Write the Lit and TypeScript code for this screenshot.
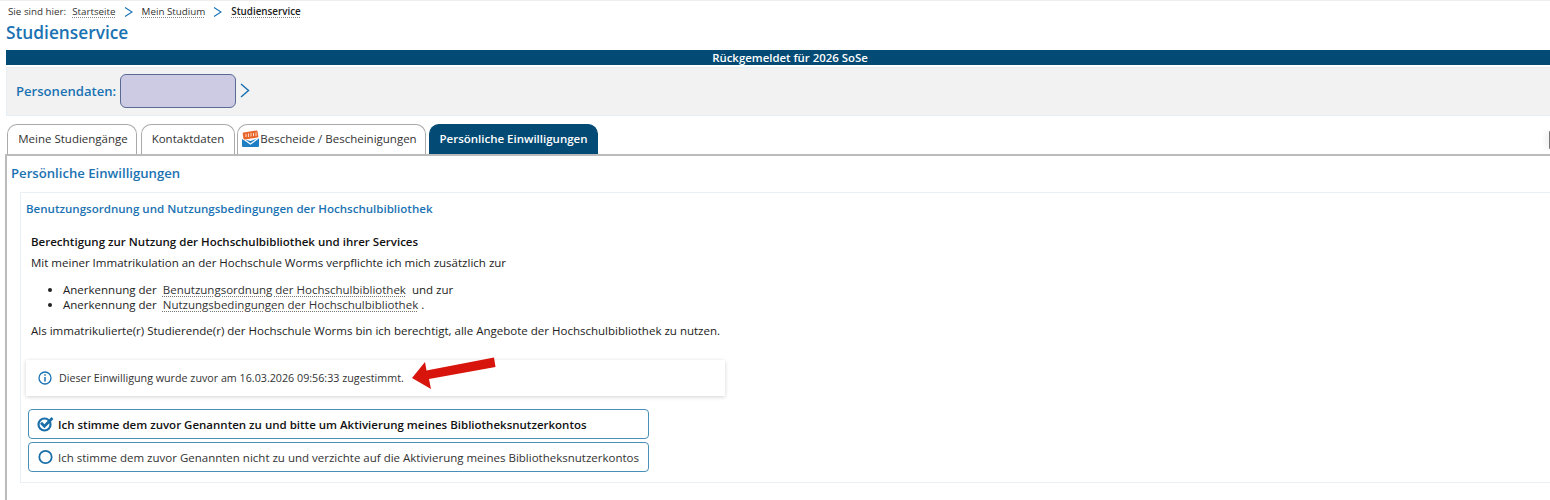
import { LitElement, html, css } from "lit";
import { customElement } from "lit/decorators.js";

@customElement("app-root")
export class AppRoot extends LitElement {
  static styles = css`
    :host { display: block; width: 1550px; height: 500px; overflow: hidden; background: #fff; font-family: "Open Sans", sans-serif; color: #222; font-size: 12px; }
    .crumbs { height: 22px; padding-left: 8px; display: flex; align-items: center; font-size: 9.8px; color: #333; border-top: 1px solid #eee; box-sizing: border-box; white-space: nowrap; }
    .crumbs .lbl { margin-right: 6px; }
    .crumbs a { color: #333; text-decoration: underline dotted #888; text-underline-offset: 2px; }
    .crumbs svg { margin: 0 9px 0 8px; }
    .crumbs b { font-weight: 600; color: #222; text-decoration: underline dotted #888; text-underline-offset: 2px; }
    h1 { margin: 0 0 0 6px; height: 27px; padding-top: 1px; font-size: 17.3px; line-height: 20px; font-weight: 600; color: #1a72b2; }
    .bar { margin-left: 6px; padding-left: 24px; height: 15px; background: #034a74; color: #fff; font-size: 11.4px; font-weight: 600; line-height: 15px; text-align: center; }
    .person { margin: 2px 0 0 6px; height: 49px; box-sizing: border-box; background: #f3f2f2; border: 1px solid #e6eef5; border-width: 1px 0 1px 1px; display: flex; align-items: center; padding: 0 0 2px 9px; }
    .person span { font-size: 13.1px; font-weight: 600; color: #1a72b2; margin-right: 4px; }
    .pbox { width: 116px; height: 34px; box-sizing: border-box; background: #cdcbe3; border: 1px solid #5a6a94; border-radius: 6px; margin-right: 4px; }
    .tabs { display: flex; margin: 7px 0 0 7px; height: 31px; align-items: flex-end; white-space: nowrap; }
    .tab { height: 30px; box-sizing: border-box; border: 1px solid #aaa; border-bottom: none; border-radius: 10px 10px 0 0; background: #fff; color: #333; display: flex; align-items: center; justify-content: center; font-size: 11.5px; padding-bottom: 2px; }
    .t1 { width: 130px; padding-left: 2px; }
    .t2 { width: 94px; margin-left: 4px; }
    .t3 { width: 189px; margin-left: 2px; gap: 1px; padding-right: 4px; }
    .t4 { width: 169px; margin-left: 3px; background: #034a74; border-color: #034a74; color: #fff; font-weight: 600; }
    .main { margin: 0 0 0 5px; height: 346px; box-sizing: border-box; border: 1px solid #bbb; border-width: 2px 0 0 2px; padding: 8px 0 0 4px; }
    h2 { margin: 0; height: 28px; font-size: 13.15px; line-height: 18px; font-weight: 600; color: #1a72b2; }
    .card { margin-left: 9px; height: 291px; box-sizing: border-box; border: 1px solid #e8f0f5; border-right: none; padding: 8px 0 0 5px; }
    h3 { margin: 0; font-size: 11.55px; line-height: 16px; font-weight: 600; color: #1a72b2; }
    .body { padding: 17px 0 0 5px; font-size: 11.53px; color: #222; }
    .body p { margin: 0; line-height: 16px; }
    .body .t { font-weight: 600; color: #111; height: 21px; }
    .body ul { margin: 12px 0 11px; padding-left: 32px; line-height: 14.5px; }
    .body a { color: #333; text-decoration: underline dotted #777; text-underline-offset: 2px; margin: 0 3px; }
    .info { margin: 21px 0 0 0; width: 699px; height: 36px; box-sizing: border-box; box-shadow: 0 1px 4px rgba(0,0,0,.18); display: flex; align-items: center; padding-left: 12px; gap: 7px; font-size: 10.73px; color: #333; }
    .opts { margin: 13px 0 0 2px; display: flex; flex-direction: column; gap: 3px; }
    .opt { width: 621px; height: 30px; box-sizing: border-box; border: 1px solid #4a8fb8; border-radius: 4px; display: flex; align-items: center; padding-left: 8px; gap: 4px; font-size: 11.5px; color: #333; background: #fff; white-space: nowrap; }
    .opt svg { flex: none; }
    .opt.on { font-weight: 600; color: #111; }
    .arrow { position: absolute; left: 412px; top: 356px; }
    .handle { position: absolute; right: 0; top: 131px; width: 1px; height: 18px; background: #777; border-radius: 2px 0 0 2px; box-shadow: -2px 0 5px rgba(0,0,0,.25); }
  `;

  private chev() {
    return html`<svg width="9" height="10" viewBox="0 0 9 10" fill="none" stroke="#1a72b2" stroke-width="1.1"><path d="M1 .5 8 5 1 9.5"/></svg>`;
  }

  render() {
    return html`
      <div class="crumbs"><span class="lbl">Sie sind hier:</span><a>Startseite</a>${this.chev()}<a>Mein Studium</a>${this.chev()}<b>Studienservice</b></div>
      <h1>Studienservice</h1>
      <div class="bar">Rückgemeldet für 2026 SoSe</div>
      <div class="person"><span>Personendaten:</span><div class="pbox"></div>
        <svg width="10" height="15" viewBox="0 0 10 15" fill="none" stroke="#1a72b2" stroke-width="1.5"><path d="M1 1l7.5 6.5L1 14"/></svg></div>
      <div class="tabs">
        <div class="tab t1">Meine Studiengänge</div>
        <div class="tab t2">Kontaktdaten</div>
        <div class="tab t3">
          <svg width="17" height="17" viewBox="0 0 17 17"><path d="M0 9l8.5 2L17 8v8a1 1 0 0 1-1 1H1a1 1 0 0 1-1-1z" fill="#1c7fc4"/><path d="M.5 8.5l8 5.5 8-6" fill="none" stroke="#fff" stroke-width="1.2"/><rect x="1" y="1.5" width="15" height="7" rx="1.2" fill="#e8652b" transform="rotate(-9 8.5 5)"/><path d="M4 7V4M6.5 7V3.5M9 6.5V3M11.5 6V3M14 6V2.5" stroke="#fbd9c4" stroke-width="1"/></svg>
          Bescheide / Bescheinigungen</div>
        <div class="tab t4">Persönliche Einwilligungen</div>
      </div>
      <div class="main">
        <h2>Persönliche Einwilligungen</h2>
        <div class="card">
          <h3>Benutzungsordnung und Nutzungsbedingungen der Hochschulbibliothek</h3>
          <div class="body">
            <p class="t">Berechtigung zur Nutzung der Hochschulbibliothek und ihrer Services</p>
            <p>Mit meiner Immatrikulation an der Hochschule Worms verpflichte ich mich zusätzlich zur</p>
            <ul>
              <li>Anerkennung der <a>Benutzungsordnung der Hochschulbibliothek</a> und zur</li>
              <li>Anerkennung der <a>Nutzungsbedingungen der Hochschulbibliothek</a>.</li>
            </ul>
            <p>Als immatrikulierte(r) Studierende(r) der Hochschule Worms bin ich berechtigt, alle Angebote der Hochschulbibliothek zu nutzen.</p>
          </div>
          <div class="info">
            <svg width="14" height="14" viewBox="0 0 14 14" fill="none" stroke="#1a72b2" stroke-width="1.3"><circle cx="7" cy="7" r="6"/><path d="M7 6v4.5M7 3.3v1.4" stroke-width="1.5"/></svg>
            Dieser Einwilligung wurde zuvor am 16.03.2026 09:56:33 zugestimmt.
          </div>
          <div class="opts">
            <div class="opt on">
              <svg width="17" height="16" viewBox="0 0 17 16" fill="none"><circle cx="7.5" cy="8.5" r="6" stroke="#1b6fa8" stroke-width="2.2"/><path d="M4 6.8l3.4 3.4L15.500 2" stroke="#1b6fa8" stroke-width="2.8"/></svg>
              Ich stimme dem zuvor Genannten zu und bitte um Aktivierung meines Bibliotheksnutzerkontos</div>
            <div class="opt">
              <svg width="17" height="16" viewBox="0 0 17 16" fill="none"><circle cx="8.500" cy="8" r="6.200" stroke="#1b6fa8" stroke-width="1.800"/></svg>
              Ich stimme dem zuvor Genannten nicht zu und verzichte auf die Aktivierung meines Bibliotheksnutzerkontos</div>
          </div>
        </div>
      </div>
      <svg class="arrow" width="86" height="34" viewBox="0 0 86 34"><path d="M0 22 13 6l1.500 8.500L82 1.500l1.500 9.500L17 23l2 10z" fill="#d8150c"/></svg>
      <div class="handle"></div>
    `;
  }
}
